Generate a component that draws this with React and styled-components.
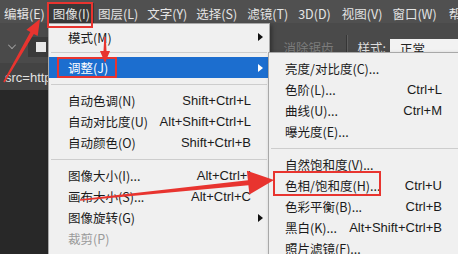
import React from 'react';
import styled, { createGlobalStyle } from 'styled-components';

const GlobalStyle = createGlobalStyle`
  html, body {
    margin: 0;
    padding: 0;
    background: #282828;
  }
  * { box-sizing: border-box; }
`;

const CJK = `"Noto Sans CJK SC", "Liberation Sans", sans-serif`;
const RED = '#e8342f';

const Screen = styled.div`
  position: relative;
  width: 458px;
  height: 254px;
  overflow: hidden;
  background: #282828;
  font-family: ${CJK};
  display: flex;
  flex-direction: column;
`;

const MenuBar = styled.div`
  height: 23px;
  flex: none;
  background: #505050;
  display: flex;
  align-items: center;
  padding: 3px 0 0 0;
  white-space: nowrap;
  overflow: hidden;
`;

const MenuItem = styled.div`
  flex: none;
  height: 100%;
  display: flex;
  align-items: center;
  padding: 0 4px;
  margin-right: ${p => p.$gap ?? 0}px;
  font-size: 12.5px;
  color: #e4e4e4;
  background: ${p => (p.$active ? '#393939' : 'transparent')};
`;

const OptionsBar = styled.div`
  height: 40px;
  flex: none;
  background: #4a4a4a;
  display: flex;
  align-items: center;
  padding: 8px 0 0 8px;
  white-space: nowrap;
`;

const Chevron = styled.div`
  flex: none;
  width: 8px;
  height: 8px;
  border-right: 1.5px solid #b8b8b8;
  border-bottom: 1.5px solid #b8b8b8;
  transform: rotate(45deg) scale(0.7);
  margin: -4px 0 0 0;
`;

const SwatchBox = styled.div`
  flex: none;
  width: 22px;
  height: 20px;
  margin-left: 12px;
  background: #3a3a3a;
  display: flex;
  align-items: center;
  justify-content: center;
  & > span {
    width: 10px;
    height: 10px;
    background: #e8e8e8;
    margin-left: 4px;
  }
`;

const Spacer = styled.div`
  flex: 1;
`;

const OptText = styled.span`
  flex: none;
  font-size: 12.5px;
  color: ${p => (p.$disabled ? '#7c7c7c' : '#dedede')};
  margin-right: ${p => p.$gap ?? 0}px;
`;

const VDivider = styled.div`
  flex: none;
  width: 1px;
  height: 24px;
  background: #363636;
  box-shadow: 1px 0 0 #5e5e5e;
  margin-right: 11px;
`;

const SelectBox = styled.div`
  flex: none;
  width: 68px;
  height: 19px;
  margin-top: 3px;
  background: #f2f2f2;
  color: #222;
  font-size: 12.5px;
  display: flex;
  align-items: center;
  padding-left: 10px;
`;

const TabRow = styled.div`
  height: 27px;
  flex: none;
  background: #434343;
  display: flex;
  align-items: center;
  padding: 1px 0 0 5px;
  font-family: "Liberation Sans", sans-serif;
  font-size: 13px;
  color: #e2e2e2;
`;

const Canvas = styled.div`
  flex: 1;
  background: #282828;
`;

const Dropdown = styled.div`
  position: absolute;
  left: ${p => p.$left}px;
  top: ${p => p.$top}px;
  width: ${p => p.$width}px;
  background: #f0f0f0;
  border: 1px solid #a8a8a8;
  box-shadow: 2px 2px 4px rgba(0, 0, 0, 0.35);
  padding-top: ${p => p.$padTop}px;
  display: flex;
  flex-direction: column;
`;

const Row = styled.div`
  height: ${p => p.$h ?? 21}px;
  flex: none;
  display: flex;
  align-items: center;
  justify-content: space-between;
  padding: 0 ${p => p.$padR}px 0 ${p => p.$padL}px;
  background: ${p => (p.$active ? '#1c6ecf' : 'transparent')};
  white-space: nowrap;
`;

const Label = styled.span`
  font-size: 12.5px;
  color: ${p => (p.$active ? '#ffffff' : p.$disabled ? '#9a9a9a' : '#1b1b1b')};
`;

const Shortcut = styled.span`
  font-family: "Liberation Sans", sans-serif;
  font-size: 13px;
  color: #1b1b1b;
`;

const SubArrow = styled.span`
  width: 0;
  height: 0;
  border-top: 4.5px solid transparent;
  border-bottom: 4.5px solid transparent;
  border-left: 5px solid ${p => (p.$light ? '#ffffff' : '#111111')};
  margin-right: -12px;
`;

const Separator = styled.div`
  height: ${p => p.$h}px;
  flex: none;
  display: flex;
  align-items: center;
  padding: 0 2px;
  &::after {
    content: '';
    flex: 1;
    height: 1px;
    background: #cdcdcd;
  }
`;

const Highlight = styled.div`
  position: absolute;
  left: ${p => p.$x}px;
  top: ${p => p.$y}px;
  width: ${p => p.$w}px;
  height: ${p => p.$h}px;
  border: 2px solid ${RED};
  pointer-events: none;
`;

const ArrowLayer = styled.svg`
  position: absolute;
  left: 0;
  top: 0;
  pointer-events: none;
`;

const imageMenu = [
  { label: '模式(M)', sub: true, h: 20 },
  { sep: 10 },
  { label: '调整(J)', sub: true, active: true },
  { sep: 12 },
  { label: '自动色调(N)', key: 'Shift+Ctrl+L' },
  { label: '自动对比度(U)', key: 'Alt+Shift+Ctrl+L' },
  { label: '自动颜色(O)', key: 'Shift+Ctrl+B' },
  { sep: 12 },
  { label: '图像大小(I)...', key: 'Alt+Ctrl+I' },
  { label: '画布大小(S)...', key: 'Alt+Ctrl+C' },
  { label: '图像旋转(G)', sub: true },
  { label: '裁剪(P)', disabled: true },
  { label: '裁切(R)...' },
];

const adjustMenu = [
  { label: '亮度/对比度(C)...' },
  { label: '色阶(L)...', key: 'Ctrl+L' },
  { label: '曲线(U)...', key: 'Ctrl+M' },
  { label: '曝光度(E)...' },
  { sep: 12 },
  { label: '自然饱和度(V)...' },
  { label: '色相/饱和度(H)...', key: 'Ctrl+U' },
  { label: '色彩平衡(B)...', key: 'Ctrl+B' },
  { label: '黑白(K)...', key: 'Alt+Shift+Ctrl+B' },
  { label: '照片滤镜(F)...' },
];

const menuNames = [
  ['编辑(E)', 0],
  ['图像(I)', 0],
  ['图层(L)', 1],
  ['文字(Y)', 1],
  ['选择(S)', 2],
  ['滤镜(T)', 2],
  ['3D(D)', 3],
  ['视图(V)', 2],
  ['窗口(W)', 4],
  ['帮助(H)', 0],
];

function arrowPoints([x1, y1], [x2, y2], w0, w1, hl, hw) {
  const dx = x2 - x1;
  const dy = y2 - y1;
  const len = Math.hypot(dx, dy);
  const ux = dx / len;
  const uy = dy / len;
  const nx = -uy;
  const ny = ux;
  const bx = x2 - ux * hl;
  const by = y2 - uy * hl;
  const pts = [
    [x1 + (nx * w0) / 2, y1 + (ny * w0) / 2],
    [bx + (nx * w1) / 2, by + (ny * w1) / 2],
    [bx + (nx * hw) / 2, by + (ny * hw) / 2],
    [x2, y2],
    [bx - (nx * hw) / 2, by - (ny * hw) / 2],
    [bx - (nx * w1) / 2, by - (ny * w1) / 2],
    [x1 - (nx * w0) / 2, y1 - (ny * w0) / 2],
  ];
  return pts.map(p => p.map(v => v.toFixed(1)).join(',')).join(' ');
}

const MenuList = ({ items, padL, padR }) =>
  items.map((it, i) =>
    it.sep ? (
      <Separator key={i} $h={it.sep} />
    ) : (
      <Row key={i} $h={it.h} $padL={padL} $padR={padR} $active={it.active}>
        <Label $active={it.active} $disabled={it.disabled}>{it.label}</Label>
        {it.key && <Shortcut>{it.key}</Shortcut>}
        {it.sub && <SubArrow $light={it.active} />}
      </Row>
    )
  );

const App = () => (
  <>
    <GlobalStyle />
    <Screen>
      <MenuBar>
        {menuNames.map(([name, gap], i) => (
          <MenuItem key={name} $gap={gap} $active={i === 1}>{name}</MenuItem>
        ))}
      </MenuBar>
      <OptionsBar>
        <Chevron />
        <SwatchBox><span /></SwatchBox>
        <Spacer />
        <OptText $disabled $gap={12}>消除锯齿</OptText>
        <VDivider />
        <OptText $gap={4}>样式:</OptText>
        <SelectBox>正常</SelectBox>
      </OptionsBar>
      <TabRow>src=http://</TabRow>
      <Canvas />

      <Dropdown $left={48} $top={23} $width={222} $padTop={3}>
        <MenuList items={imageMenu} padL={19} padR={18} />
      </Dropdown>

      <Dropdown $left={268} $top={52} $width={200} $padTop={5}>
        <MenuList items={adjustMenu} padL={16} padR={25} />
      </Dropdown>

      <Highlight $x={47} $y={2} $w={46} $h={26} />
      <Highlight $x={57} $y={57} $w={60} $h={21} />
      <Highlight $x={273} $y={171} $w={108} $h={25} />

      <ArrowLayer width="458" height="254" viewBox="0 0 458 254">
        <polygon fill={RED} points={arrowPoints([4, 82], [40, 19], 1.5, 4, 16, 13)} />
        <polygon fill={RED} points={arrowPoints([105, 37], [105, 63], 1.5, 3, 12, 10)} />
        <polygon fill={RED} points={arrowPoints([80, 200], [274, 180], 1.5, 5, 26, 24)} />
      </ArrowLayer>
    </Screen>
  </>
);

export default App;
